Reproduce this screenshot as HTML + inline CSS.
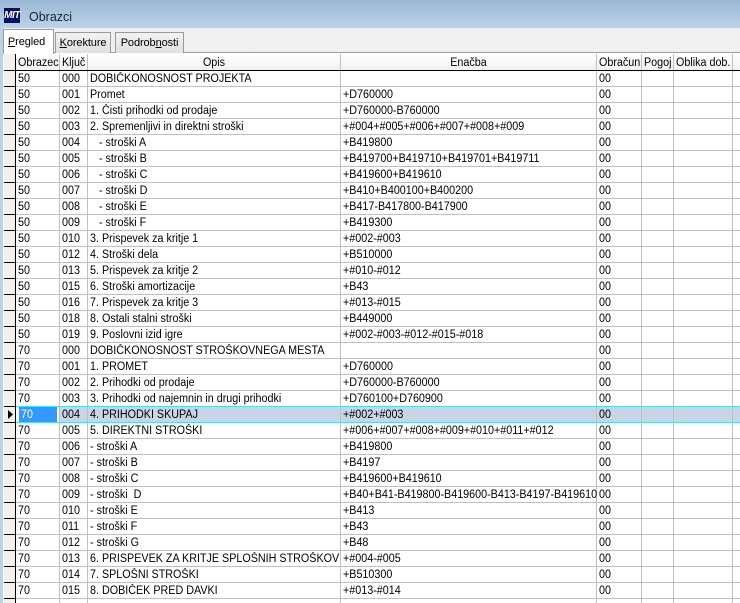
<!DOCTYPE html>
<html><head><meta charset="utf-8">
<style>
html,body{margin:0;padding:0}
body{width:740px;height:603px;overflow:hidden;position:relative;background:#fff;font-family:"Liberation Sans",sans-serif;font-size:11.5px;color:#000}
div{position:absolute;box-sizing:border-box}
#title{left:0;top:0;width:740px;height:28px;background:linear-gradient(#9ab6d3,#bcd4ea)}
#logo{left:4px;top:8px;width:16px;height:15px;background:#0a0f64;color:#fff;font:italic bold 10px/15px "Liberation Sans",sans-serif;text-align:center;letter-spacing:-.5px}
#cap{left:29px;top:9px;font-size:12.5px;line-height:16px;color:#1a2430}
#band{left:0;top:28px;width:740px;height:25px;background:#f0f0f0}
#frame{left:0;top:28px;width:3px;height:575px;background:#b9d1ea}
#pl{left:3px;top:52px;width:737px;height:2px;background:#a0a0a0;border-bottom:1px solid #fff}
.tab{height:21px;top:32px;background:linear-gradient(#f2f2f2,#e0e0e0);border:1px solid #9a9a9a;border-bottom:0;text-align:center;line-height:20px;font-size:11px;letter-spacing:-.1px}
#t1{left:3px;top:29px;width:51px;height:25px;background:#fff;line-height:24px;z-index:2;border-bottom:0;padding-right:4px}
#t2{left:55px;width:56px}
#t3{left:115px;width:69px}
#hd{left:4px;top:54px;width:736px;height:16px;background:linear-gradient(#fff,#f1f1f1)}
#ind{left:4px;top:54px;width:11px;height:549px;background:#f0f0f0}
.h{top:55px;height:15px;line-height:15px;white-space:nowrap;transform:scaleX(.935);transform-origin:left;margin-top:1px}
.h.m{transform-origin:center}
.v{top:54px;height:549px;width:1px;background:#c0c0c0}
.ln{left:16px;width:724px;height:1px;background:#c0c0c0}
.il{left:4px;width:11px;height:1px;background:#000}
.r{left:0;width:740px;height:16px}
.r span{position:absolute;top:1px;line-height:16px;white-space:nowrap;transform:scaleX(.935);transform-origin:left}
.a{left:18px}.b{left:62px}.c{left:90px}.d{left:343px}.e{left:599px}
#sel{left:16px;top:406px;width:724px;height:17px;background:#c6d6e8;border-top:1px solid #00ffff;border-bottom:1px solid #00ffff}
#cell{left:16px;top:407px;width:43px;height:15px;background:#3399ff;border-left:3px solid #fff;border-right:2px solid #fff}
</style></head><body>
<div id="title"></div>
<div id="logo">MIT</div>
<div id="cap">Obrazci</div>
<div id="band"></div>
<div id="frame"></div>
<div id="pl"></div>
<div class="tab" id="t1"><u>P</u>regled</div>
<div class="tab" id="t2"><u>K</u>orekture</div>
<div class="tab" id="t3">Podrob<u>n</u>osti</div>
<div id="hd"></div>
<div id="ind"></div>
<div class="h" style="left:18px">Obrazec</div>
<div class="h" style="left:62px">Ključ</div>
<div class="h m" style="left:88px;width:252px;text-align:center">Opis</div>
<div class="h m" style="left:341px;width:255px;text-align:center">Enačba</div>
<div class="h" style="left:599px">Obračun</div>
<div class="h" style="left:644px">Pogoj</div>
<div class="h" style="left:676px">Oblika dob.</div>
<div id="sel"></div>
<div id="cell"></div>
<div class="v" style="left:59px"></div>
<div class="v" style="left:87px"></div>
<div class="v" style="left:340px"></div>
<div class="v" style="left:596px"></div>
<div class="v" style="left:641px"></div>
<div class="v" style="left:673px"></div>
<div class="v" style="left:732px"></div>
<div class="v" style="left:15px;background:#000"></div>
<div class="ln" style="top:70px;background:#000;left:4px;width:736px;height:1px"></div>
<div class="ln" style="top:86px"></div><div class="ln" style="top:102px"></div><div class="ln" style="top:118px"></div><div class="ln" style="top:134px"></div><div class="ln" style="top:150px"></div><div class="ln" style="top:166px"></div><div class="ln" style="top:182px"></div><div class="ln" style="top:198px"></div><div class="ln" style="top:214px"></div><div class="ln" style="top:230px"></div><div class="ln" style="top:246px"></div><div class="ln" style="top:262px"></div><div class="ln" style="top:278px"></div><div class="ln" style="top:294px"></div><div class="ln" style="top:310px"></div><div class="ln" style="top:326px"></div><div class="ln" style="top:342px"></div><div class="ln" style="top:358px"></div><div class="ln" style="top:374px"></div><div class="ln" style="top:390px"></div><div class="ln" style="top:438px"></div><div class="ln" style="top:454px"></div><div class="ln" style="top:470px"></div><div class="ln" style="top:486px"></div><div class="ln" style="top:502px"></div><div class="ln" style="top:518px"></div><div class="ln" style="top:534px"></div><div class="ln" style="top:550px"></div><div class="ln" style="top:566px"></div><div class="ln" style="top:582px"></div><div class="ln" style="top:598px"></div>
<div class="ln" style="top:406px;background:#00ffff"></div><div class="ln" style="top:422px;background:#00ffff"></div>
<div class="il" style="top:86px"></div><div class="il" style="top:102px"></div><div class="il" style="top:118px"></div><div class="il" style="top:134px"></div><div class="il" style="top:150px"></div><div class="il" style="top:166px"></div><div class="il" style="top:182px"></div><div class="il" style="top:198px"></div><div class="il" style="top:214px"></div><div class="il" style="top:230px"></div><div class="il" style="top:246px"></div><div class="il" style="top:262px"></div><div class="il" style="top:278px"></div><div class="il" style="top:294px"></div><div class="il" style="top:310px"></div><div class="il" style="top:326px"></div><div class="il" style="top:342px"></div><div class="il" style="top:358px"></div><div class="il" style="top:374px"></div><div class="il" style="top:390px"></div><div class="il" style="top:406px"></div><div class="il" style="top:422px"></div><div class="il" style="top:438px"></div><div class="il" style="top:454px"></div><div class="il" style="top:470px"></div><div class="il" style="top:486px"></div><div class="il" style="top:502px"></div><div class="il" style="top:518px"></div><div class="il" style="top:534px"></div><div class="il" style="top:550px"></div><div class="il" style="top:566px"></div><div class="il" style="top:582px"></div><div class="il" style="top:598px"></div>
<svg style="position:absolute;left:8px;top:410px" width="6" height="9"><path d="M0 0L5 4.5L0 9Z" fill="#000"/></svg>
<div class="r" style="top:70px"><span class="a">50</span><span class="b">000</span><span class="c">DOBIČKONOSNOST PROJEKTA</span><span class="e">00</span></div>
<div class="r" style="top:86px"><span class="a">50</span><span class="b">001</span><span class="c">Promet</span><span class="d">+D760000</span><span class="e">00</span></div>
<div class="r" style="top:102px"><span class="a">50</span><span class="b">002</span><span class="c">1. Čisti prihodki od prodaje</span><span class="d">+D760000-B760000</span><span class="e">00</span></div>
<div class="r" style="top:118px"><span class="a">50</span><span class="b">003</span><span class="c">2. Spremenljivi in direktni stroški</span><span class="d">+#004+#005+#006+#007+#008+#009</span><span class="e">00</span></div>
<div class="r" style="top:134px"><span class="a">50</span><span class="b">004</span><span class="c">&nbsp;&nbsp; - stroški A</span><span class="d">+B419800</span><span class="e">00</span></div>
<div class="r" style="top:150px"><span class="a">50</span><span class="b">005</span><span class="c">&nbsp;&nbsp; - stroški B</span><span class="d">+B419700+B419710+B419701+B419711</span><span class="e">00</span></div>
<div class="r" style="top:166px"><span class="a">50</span><span class="b">006</span><span class="c">&nbsp;&nbsp; - stroški C</span><span class="d">+B419600+B419610</span><span class="e">00</span></div>
<div class="r" style="top:182px"><span class="a">50</span><span class="b">007</span><span class="c">&nbsp;&nbsp; - stroški D</span><span class="d">+B410+B400100+B400200</span><span class="e">00</span></div>
<div class="r" style="top:198px"><span class="a">50</span><span class="b">008</span><span class="c">&nbsp;&nbsp; - stroški E</span><span class="d">+B417-B417800-B417900</span><span class="e">00</span></div>
<div class="r" style="top:214px"><span class="a">50</span><span class="b">009</span><span class="c">&nbsp;&nbsp; - stroški F</span><span class="d">+B419300</span><span class="e">00</span></div>
<div class="r" style="top:230px"><span class="a">50</span><span class="b">010</span><span class="c">3. Prispevek za kritje 1</span><span class="d">+#002-#003</span><span class="e">00</span></div>
<div class="r" style="top:246px"><span class="a">50</span><span class="b">012</span><span class="c">4. Stroški dela</span><span class="d">+B510000</span><span class="e">00</span></div>
<div class="r" style="top:262px"><span class="a">50</span><span class="b">013</span><span class="c">5. Prispevek za kritje 2</span><span class="d">+#010-#012</span><span class="e">00</span></div>
<div class="r" style="top:278px"><span class="a">50</span><span class="b">015</span><span class="c">6. Stroški amortizacije</span><span class="d">+B43</span><span class="e">00</span></div>
<div class="r" style="top:294px"><span class="a">50</span><span class="b">016</span><span class="c">7. Prispevek za kritje 3</span><span class="d">+#013-#015</span><span class="e">00</span></div>
<div class="r" style="top:310px"><span class="a">50</span><span class="b">018</span><span class="c">8. Ostali stalni stroški</span><span class="d">+B449000</span><span class="e">00</span></div>
<div class="r" style="top:326px"><span class="a">50</span><span class="b">019</span><span class="c">9. Poslovni izid igre</span><span class="d">+#002-#003-#012-#015-#018</span><span class="e">00</span></div>
<div class="r" style="top:342px"><span class="a">70</span><span class="b">000</span><span class="c">DOBIČKONOSNOST STROŠKOVNEGA MESTA</span><span class="e">00</span></div>
<div class="r" style="top:358px"><span class="a">70</span><span class="b">001</span><span class="c">1. PROMET</span><span class="d">+D760000</span><span class="e">00</span></div>
<div class="r" style="top:374px"><span class="a">70</span><span class="b">002</span><span class="c">2. Prihodki od prodaje</span><span class="d">+D760000-B760000</span><span class="e">00</span></div>
<div class="r" style="top:390px"><span class="a">70</span><span class="b">003</span><span class="c">3. Prihodki od najemnin in drugi prihodki</span><span class="d">+D760100+D760900</span><span class="e">00</span></div>
<div class="r" style="top:406px"><span class="a" style="left:21px;color:#fff">70</span><span class="b">004</span><span class="c">4. PRIHODKI SKUPAJ</span><span class="d">+#002+#003</span><span class="e">00</span></div>
<div class="r" style="top:422px"><span class="a">70</span><span class="b">005</span><span class="c">5. DIREKTNI STROŠKI</span><span class="d">+#006+#007+#008+#009+#010+#011+#012</span><span class="e">00</span></div>
<div class="r" style="top:438px"><span class="a">70</span><span class="b">006</span><span class="c">- stroški A</span><span class="d">+B419800</span><span class="e">00</span></div>
<div class="r" style="top:454px"><span class="a">70</span><span class="b">007</span><span class="c">- stroški B</span><span class="d">+B4197</span><span class="e">00</span></div>
<div class="r" style="top:470px"><span class="a">70</span><span class="b">008</span><span class="c">- stroški C</span><span class="d">+B419600+B419610</span><span class="e">00</span></div>
<div class="r" style="top:486px"><span class="a">70</span><span class="b">009</span><span class="c">- stroški&nbsp; D</span><span class="d">+B40+B41-B419800-B419600-B413-B4197-B419610</span><span class="e">00</span></div>
<div class="r" style="top:502px"><span class="a">70</span><span class="b">010</span><span class="c">- stroški E</span><span class="d">+B413</span><span class="e">00</span></div>
<div class="r" style="top:518px"><span class="a">70</span><span class="b">011</span><span class="c">- stroški F</span><span class="d">+B43</span><span class="e">00</span></div>
<div class="r" style="top:534px"><span class="a">70</span><span class="b">012</span><span class="c">- stroški G</span><span class="d">+B48</span><span class="e">00</span></div>
<div class="r" style="top:550px"><span class="a">70</span><span class="b">013</span><span class="c">6. PRISPEVEK ZA KRITJE SPLOŠNIH STROŠKOV</span><span class="d">+#004-#005</span><span class="e">00</span></div>
<div class="r" style="top:566px"><span class="a">70</span><span class="b">014</span><span class="c">7. SPLOŠNI STROŠKI</span><span class="d">+B510300</span><span class="e">00</span></div>
<div class="r" style="top:582px"><span class="a">70</span><span class="b">015</span><span class="c">8. DOBIČEK PRED DAVKI</span><span class="d">+#013-#014</span><span class="e">00</span></div>
</body></html>
